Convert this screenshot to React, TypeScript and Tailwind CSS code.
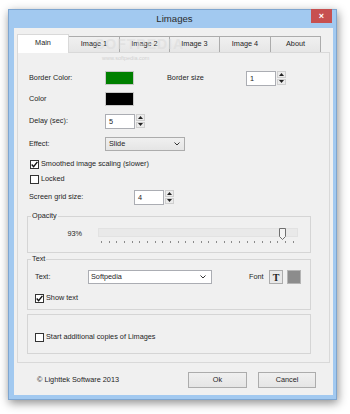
import React from "react";

const Check = ({ checked }: { checked?: boolean }) => (
  <span className="flex h-[9px] w-[9px] shrink-0 items-center justify-center border border-[#333333] bg-white">
    {checked && (
      <svg width="7" height="7" viewBox="0 0 7 7">
        <path d="M0.7 3.5 L2.6 5.6 L6.4 0.9" fill="none" stroke="#111" strokeWidth="1.4" />
      </svg>
    )}
  </span>
);

const Arrow = ({ up }: { up?: boolean }) => (
  <svg width="5" height="3" viewBox="0 0 5 3">
    <path d={up ? "M0 3 L2.5 0 L5 3 Z" : "M0 0 L5 0 L2.5 3 Z"} fill="#222" />
  </svg>
);

const Spinner = ({ value }: { value: string }) => (
  <div className="flex h-[15px] items-center">
    <div className="h-[15px] w-[30px] border border-[#abadb3] bg-white pl-[3px] leading-[13px]">{value}</div>
    <div className="ml-[1px] flex h-[14px] w-[9px] flex-col gap-px">
      <div className="flex flex-1 items-center justify-center border border-[#cfcfcf] bg-[#ebebeb]">
        <Arrow up />
      </div>
      <div className="flex flex-1 items-center justify-center border border-[#cfcfcf] bg-[#ebebeb]">
        <Arrow />
      </div>
    </div>
  </div>
);

const Chevron = () => (
  <svg width="6" height="4" viewBox="0 0 6 4">
    <path d="M0.5 0.5 L3 3 L5.5 0.5" fill="none" stroke="#333" strokeWidth="1" />
  </svg>
);

const tabs = [
  { label: "Main", w: "w-[52px]" },
  { label: "Image 1", w: "w-[52px]" },
  { label: "Image 2", w: "w-[51px]" },
  { label: "Image 3", w: "w-[51px]" },
  { label: "Image 4", w: "w-[52px]" },
  { label: "About", w: "w-[51px]" },
];

const Group = ({ title, className, children }: { title?: string; className: string; children?: React.ReactNode }) => (
  <div className={`relative ml-[9px] w-[284px] border border-[#d5d5d5] ${className}`}>
    {title && (
      <span className="absolute -top-[5px] left-[3px] bg-[#f0f0f0] px-[1px] leading-[8px]">{title}</span>
    )}
    {children}
  </div>
);

export default function App() {
  return (
    <div className="h-[414px] w-[350px] overflow-hidden bg-white pl-[8px] pt-[9px] font-['Liberation_Sans',Arial,sans-serif] text-[7.3px] text-[#1e1e1e]">
      <div className="relative flex h-[391px] w-[329px] flex-col border border-[#7fa6d0] bg-[#a2c9f0] pb-[4px] pl-[5px] pr-[3px] shadow-[1px_3px_9px_rgba(0,0,0,0.45)]">
        {/* title bar */}
        <div className="flex h-[18px] shrink-0 items-center justify-center pl-[2px] text-[9.6px] text-[#2b2b2b]">Limages</div>
        <div className="absolute -top-px right-[4px] flex h-[14px] w-[21px] items-center justify-center bg-[#c75050] text-[9px] font-bold leading-none text-white">
          ×
        </div>

        {/* watermark */}
        <div className="pointer-events-none absolute left-[86px] top-[24px] text-[14px] font-bold tracking-[1px] text-[#dcdcdc] opacity-60">
          SOFTPEDIA
        </div>
        <div className="pointer-events-none absolute left-[93px] top-[44px] text-[5.5px] text-[#d0d0d0]">www.softpedia.com</div>

        {/* client */}
        <div className="flex flex-1 flex-col bg-[#f0f0f0]">
          <div className="ml-[3px] mt-[6px] flex h-[18px] items-end">
            {tabs.map((t, i) =>
              i === 0 ? (
                <div
                  key={t.label}
                  className={`relative z-10 -mb-px flex h-[19px] ${t.w} items-center justify-center border border-b-0 border-[#d9d9d9] bg-white pb-[2px]`}
                >
                  {t.label}
                </div>
              ) : (
                <div
                  key={t.label}
                  className={`-ml-px flex h-[16px] ${t.w} items-center justify-center border border-b-0 border-[#acacac] bg-gradient-to-b from-[#f0f0f0] to-[#e6e6e6]`}
                >
                  {t.label}
                </div>
              )
            )}
          </div>

          {/* tab page */}
          <div className="ml-[3px] flex h-[311px] w-[313px] flex-col border border-[#d9d9d9] bg-[#f0f0f0]">
            <div className="ml-[11px] mt-[18px] flex h-[14px] items-center">
              <span className="w-[76px]">Border Color:</span>
              <span className="h-[14px] w-[29px] border border-[#c8c8c8] bg-[#008000]" />
              <span className="ml-[33px] w-[79px]">Border size</span>
              <Spinner value="1" />
            </div>
            <div className="ml-[11px] mt-[7px] flex h-[14px] items-center">
              <span className="w-[76px]">Color</span>
              <span className="h-[14px] w-[29px] border border-[#c8c8c8] bg-black" />
            </div>
            <div className="ml-[11px] mt-[8px] flex h-[14px] items-center">
              <span className="w-[76px]">Delay (sec):</span>
              <Spinner value="5" />
            </div>
            <div className="ml-[11px] mt-[9px] flex h-[14px] items-center">
              <span className="w-[76px]">Effect:</span>
              <div className="flex h-[14px] w-[80px] items-center justify-between border border-[#acacac] bg-gradient-to-b from-[#f0f0f0] to-[#e5e5e5] pl-[3px] pr-[4px]">
                <span>Slide</span>
                <Chevron />
              </div>
            </div>
            <div className="ml-[12px] mt-[6px] flex h-[14px] items-center gap-[2px]">
              <Check checked />
              <span>Smoothed image scaling (slower)</span>
            </div>
            <div className="ml-[12px] mt-px flex h-[14px] items-center gap-[2px]">
              <Check />
              <span>Locked</span>
            </div>
            <div className="ml-[11px] mt-[4px] flex h-[14px] items-center">
              <span className="w-[105px]">Screen grid size:</span>
              <Spinner value="4" />
            </div>

            {/* opacity */}
            <Group title="Opacity" className="mt-[12px] h-[37px]">
              <div className="mt-[11px] flex items-start">
                <span className="mt-[1px] w-[54px] text-right">93%</span>
                <div className="ml-[16px] flex w-[200px] flex-col">
                  <div className="relative h-[9px] w-[200px] border border-[#e2e2e2] bg-[#e9e9e9]">
                    <svg className="absolute -top-px left-[180px]" width="7" height="12" viewBox="0 0 7 12">
                      <path d="M0.5 0.5 H6.5 V8.5 L3.5 11.5 L0.5 8.5 Z" fill="#f4f4f4" stroke="#6f6f6f" strokeWidth="1" />
                    </svg>
                  </div>
                  <div className="mt-[4px] flex w-[196px] justify-between pl-[3px]">
                    {Array.from({ length: 26 }).map((_, i) => (
                      <span key={i} className="h-[2px] w-px bg-[#8a8a8a]" />
                    ))}
                  </div>
                </div>
              </div>
            </Group>

            {/* text */}
            <Group title="Text" className="mt-[6px] h-[51px]">
              <div className="ml-[7px] mt-[10px] flex h-[14px] items-center">
                <span className="w-[53px]">Text:</span>
                <div className="flex h-[14px] w-[124px] items-center justify-between border border-[#abadb3] bg-white pl-[2px] pr-[5px]">
                  <span>Softpedia</span>
                  <Chevron />
                </div>
                <span className="ml-[37px] w-[20px]">Font</span>
                <span className="flex h-[14px] w-[14px] items-center justify-center border border-[#acacac] bg-[#e8e8e8] font-['Liberation_Serif',serif] text-[10px] font-bold">
                  T
                </span>
                <span className="ml-[4px] h-[14px] w-[14px] border border-[#b5b5b5] bg-[#8c8c8c]" />
              </div>
              <div className="ml-[7px] mt-[9px] flex items-center gap-[2px]">
                <Check checked />
                <span>Show text</span>
              </div>
            </Group>

            {/* copies */}
            <Group className="mt-[4px] h-[40px]">
              <div className="ml-[7px] mt-[17px] flex items-center gap-[2px]">
                <Check />
                <span>Start additional copies of Limages</span>
              </div>
            </Group>
          </div>

          {/* footer */}
          <div className="mt-[9px] flex h-[16px] items-center">
            <span className="ml-[23px] w-[151px]">© Lighttek Software 2013</span>
            <div className="flex h-[16px] w-[59px] items-center justify-center border border-[#acacac] bg-gradient-to-b from-[#f0f0f0] to-[#e5e5e5]">
              Ok
            </div>
            <div className="ml-[11px] flex h-[16px] w-[58px] items-center justify-center border border-[#acacac] bg-gradient-to-b from-[#f0f0f0] to-[#e5e5e5]">
              Cancel
            </div>
          </div>
        </div>
      </div>
    </div>
  );
}
